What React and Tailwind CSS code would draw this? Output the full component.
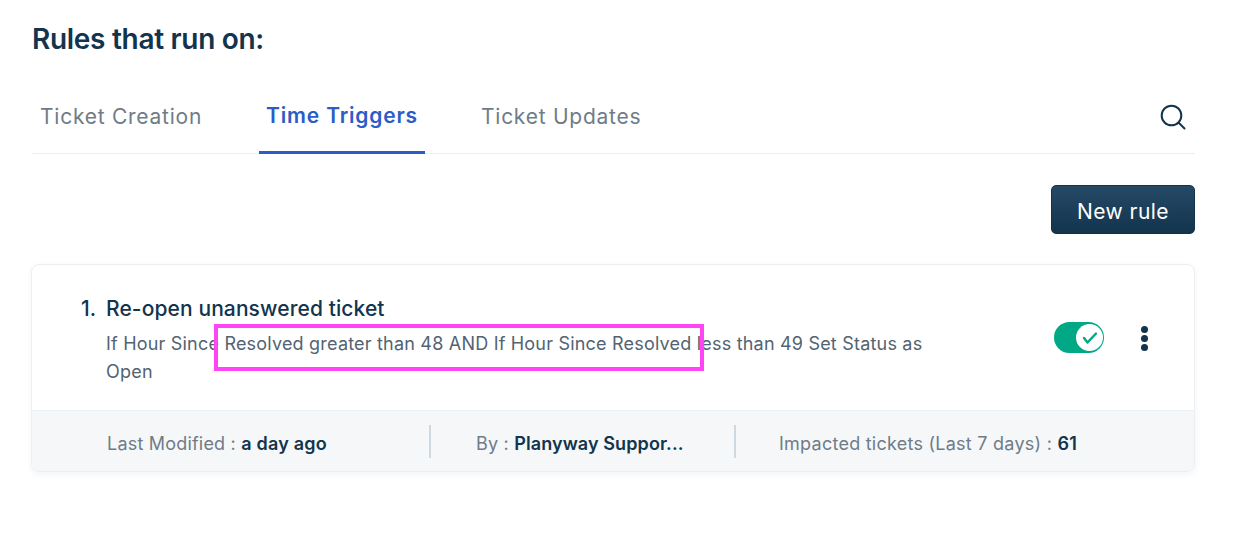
import React from "react";

export default function App() {
  return (
    <div className="relative w-[1250px] h-[539px] bg-white overflow-hidden pl-[32px] pr-[55px] pt-[21px] font-['Inter','Liberation_Sans',sans-serif]">
      <h1 className="text-[28px] leading-[36px] font-semibold text-[#12344d] tracking-[-0.3px]">Rules that run on:</h1>

      <div className="mt-[25px] flex items-stretch h-[72px] border-b border-[#ebeff3]">
        <div className="px-[8px] mr-[49px] flex items-center pb-[2px] text-[21px] tracking-[0.75px] text-[#6f7c87]">Ticket Creation</div>
        <div className="px-[7px] mr-[40px] flex items-center pb-[1px] text-[21px] font-semibold tracking-[0.82px] text-[#2c5cc5] border-b-[3px] border-[#2c5cc5] mb-[-1px]">Time Triggers</div>
        <div className="px-[16px] flex items-center pb-[2px] text-[21px] tracking-[0.75px] text-[#6f7c87]">Ticket Updates</div>
        <div className="ml-auto mr-[9px] flex items-center pb-[1px]">
          <svg width="26" height="26" viewBox="0 0 26 26" fill="none" stroke="#12344d" strokeWidth="2" strokeLinecap="round">
            <circle cx="11.5" cy="11.5" r="9.8" />
            <path d="M18.5 18.5l6 6" />
          </svg>
        </div>
      </div>

      <div className="mt-[31px] flex justify-end">
        <button className="w-[144px] h-[49px] pt-[5px] rounded-[5px] bg-gradient-to-b from-[#264966] to-[#12344d] text-white text-[21px] tracking-[0.45px] border border-[#12344d]">New rule</button>
      </div>

      <div className="mt-[30px] ml-[-1px] h-[208px] rounded-[8px] border border-[#ebeff3] shadow-[0_2px_6px_rgba(18,52,77,0.06)] overflow-hidden flex flex-col">
        <div className="flex-1 flex pl-[49px] pr-[46px] pt-[30px]">
          <div className="w-[25px] shrink-0 text-[21px] leading-[28px] font-medium text-[#12344d]">1.</div>
          <div className="w-[832px]">
            <div className="text-[21px] leading-[28px] font-medium text-[#12344d] tracking-[0.1px]">Re-open unanswered ticket</div>
            <p className="mt-[7px] text-[18px] leading-[28px] text-[#526372] tracking-[0.2px]">If Hour Since Resolved greater than 48 AND If Hour Since Resolved less than 49 Set Status as Open</p>
          </div>
          <div className="ml-auto flex items-start pt-[27px] gap-[37px]">
            <div className="relative w-[50px] h-[31px] rounded-full bg-[#00a886]">
              <div className="absolute right-[1px] top-[2px] w-[27px] h-[27px] rounded-full bg-white flex items-center justify-center">
                <svg width="16" height="16" viewBox="0 0 16 16" fill="none" stroke="#00a886" strokeWidth="2.4" strokeLinecap="round" strokeLinejoin="round">
                  <path d="M2 8l3.5 4.5L14 3.5" />
                </svg>
              </div>
            </div>
            <div className="flex flex-col gap-[2px] pt-[4px]">
              <span className="w-[7px] h-[7px] rounded-full bg-[#12344d]" />
              <span className="w-[7px] h-[7px] rounded-full bg-[#12344d]" />
              <span className="w-[7px] h-[7px] rounded-full bg-[#12344d]" />
            </div>
          </div>
        </div>
        <div className="h-[61px] bg-[#f5f7f9] border-t border-[#ebeff3] flex items-center text-[18px] text-[#6f7c87] tracking-[0.2px]">
          <div className="w-[399px] pl-[75px] h-[33px] pt-[4px] flex items-center border-r-2 border-[#cfd7df]">
            <span>Last Modified :&nbsp;</span><span className="font-semibold text-[#12344d]">a day ago</span>
          </div>
          <div className="w-[305px] pl-[45px] h-[33px] pt-[4px] flex items-center border-r-2 border-[#cfd7df]">
            <span className="whitespace-pre">By :&nbsp;</span><span className="font-semibold text-[#12344d] tracking-[0.1px]">Planyway Suppor...</span>
          </div>
          <div className="pl-[43px] pt-[4px] flex items-center tracking-[0.25px]">
            <span>Impacted tickets (Last 7 days) :&nbsp;</span><span className="font-semibold text-[#12344d]">61</span>
          </div>
        </div>
      </div>

      <div className="absolute left-[214px] top-[324px] w-[490px] h-[47px] border-[4px] border-[#ff44f5]" />
    </div>
  );
}
